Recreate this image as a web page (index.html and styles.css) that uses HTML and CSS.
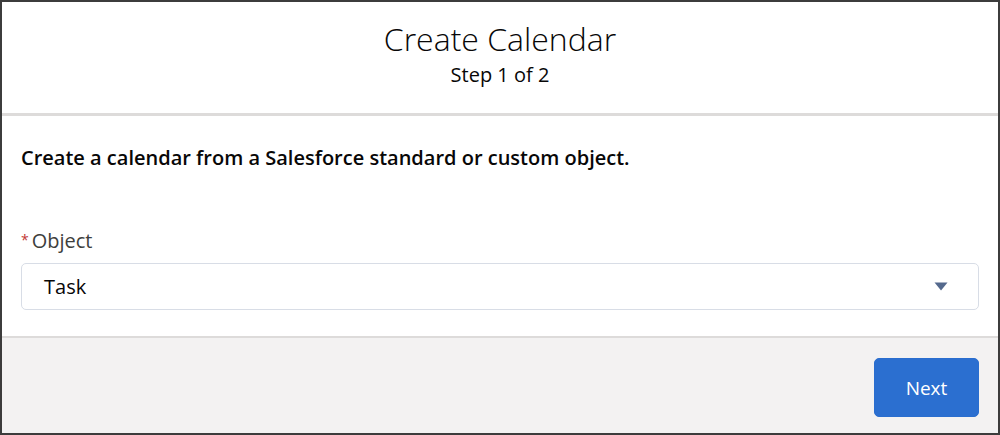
FILE: index.html
```html
<!DOCTYPE html>
<html>
<head>
<meta charset="utf-8">
<link rel="stylesheet" href="styles.css">
</head>
<body>
<div class="modal">
  <header class="header">
    <h1 class="title">Create Calendar</h1>
    <div class="subtitle">Step 1 of 2</div>
  </header>
  <main class="content">
    <p class="intro">Create a calendar from a Salesforce standard or custom object.</p>
    <label class="label"><abbr class="req">*</abbr>Object</label>
    <div class="select">
      <span class="value">Task</span>
      <svg class="caret" width="14" height="9" viewBox="0 0 14 9"><path d="M0.5 0.5 H13.5 L7 8.5 Z" fill="#54698d"/></svg>
    </div>
  </main>
  <footer class="footer">
    <button class="btn">Next</button>
  </footer>
</div>
</body>
</html>
```

FILE: styles.css
```css
* { box-sizing: border-box; }
html, body { margin: 0; padding: 0; background: #fff; }
body { font-family: "Open Sans", "Noto Sans", sans-serif; color: #16325c; }
.modal {
  width: 1000px;
  height: 435px;
  border: 2px solid #3c3c3c;
  display: flex;
  flex-direction: column;
  background: #fff;
}
.header {
  height: 114px;
  flex: none;
  border-bottom: 3px solid #dddbda;
  display: flex;
  flex-direction: column;
  align-items: center;
  padding-top: 18px;
}
.title {
  margin: 0;
  font-weight: 300;
  font-size: 32px;
  line-height: 38px;
  color: #080707;
}
.subtitle {
  margin-top: 5px;
  font-size: 20px;
  line-height: 24px;
  color: #080707;
}
.content {
  flex: 1;
  padding: 30px 19px 0 19px;
}
.intro {
  margin: 0;
  font-size: 20px;
  font-weight: 600;
  line-height: 24px;
  color: #080707;
}
.label {
  display: block;
  margin-top: 58px;
  font-size: 20px;
  line-height: 24px;
  color: #3e3e3c;
}
.req {
  color: #c23934;
  text-decoration: none;
  font-size: 14px;
  margin-right: 3px;
  vertical-align: 3px;
}
.select {
  margin-top: 10px;
  height: 47px;
  border: 1px solid #d8dde6;
  border-radius: 5px;
  display: flex;
  align-items: center;
  justify-content: space-between;
  padding: 0 30px 0 22px;
}
.value { font-size: 20px; color: #080707; }
.footer {
  height: 97px;
  flex: none;
  background: #f3f2f2;
  border-top: 2px solid #dddbda;
  display: flex;
  justify-content: flex-end;
  align-items: flex-start;
  padding: 20px 19px 0 0;
}
.btn {
  width: 105px;
  height: 59px;
  border: 1px solid #2a6ecf;
  border-radius: 5px;
  background: #2b6fd0;
  color: #fff;
  font-family: "Open Sans", sans-serif;
  font-size: 19px;
}
```
